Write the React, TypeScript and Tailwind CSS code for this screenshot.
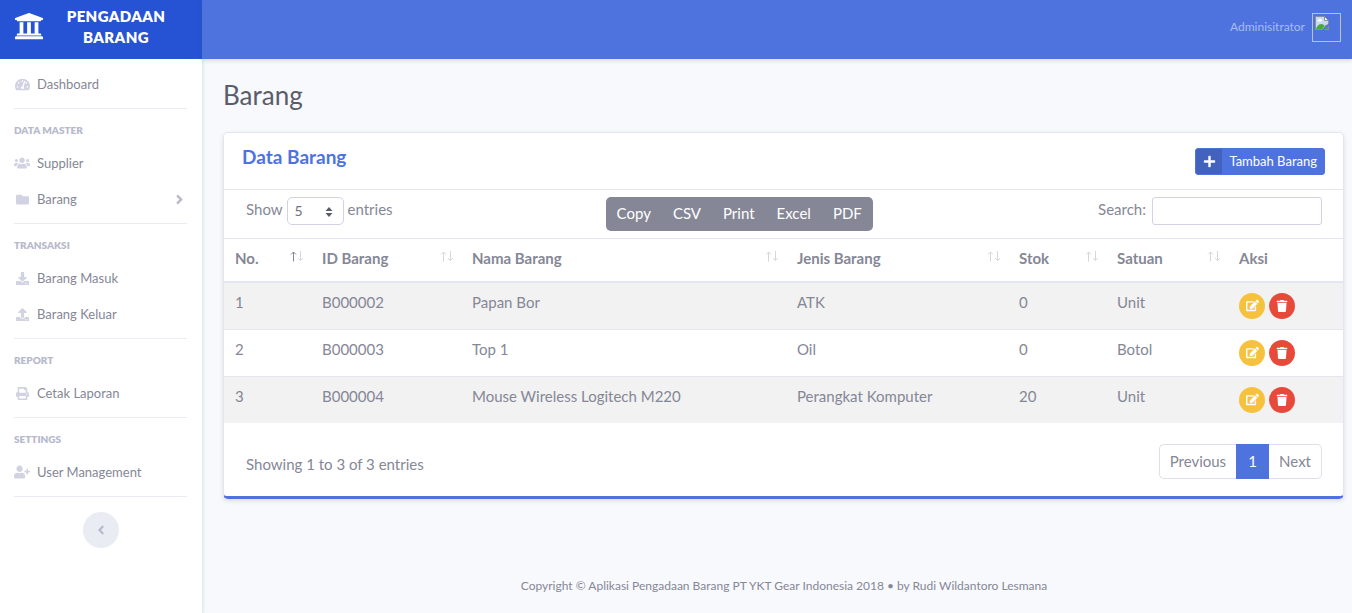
import { useState, type ReactNode } from "react";
import type { IconType } from "react-icons";
import {
  FaAngleLeft,
  FaAngleRight,
  FaDownload,
  FaEdit,
  FaFolder,
  FaPlus,
  FaPrint,
  FaTachometerAlt,
  FaTrash,
  FaUniversity,
  FaUpload,
  FaUserPlus,
  FaUsers,
} from "react-icons/fa";

type Item = { label: string; icon: IconType; iconSize: string; expandable?: boolean };

const sections: { title: string; items: Item[] }[] = [
  {
    title: "Data Master",
    items: [
      { label: "Supplier", icon: FaUsers, iconSize: "size-4" },
      { label: "Barang", icon: FaFolder, iconSize: "size-[13px]", expandable: true },
    ],
  },
  {
    title: "Transaksi",
    items: [
      { label: "Barang Masuk", icon: FaDownload, iconSize: "size-[13px]" },
      { label: "Barang Keluar", icon: FaUpload, iconSize: "size-[13px]" },
    ],
  },
  { title: "Report", items: [{ label: "Cetak Laporan", icon: FaPrint, iconSize: "size-[13px]" }] },
  { title: "Settings", items: [{ label: "User Management", icon: FaUserPlus, iconSize: "size-4" }] },
];

const columns = [
  { label: "No.", width: "w-[87px]" },
  { label: "ID Barang", width: "w-[150px]" },
  { label: "Nama Barang", width: "w-[325px]" },
  { label: "Jenis Barang", width: "w-[222px]" },
  { label: "Stok", width: "w-[98px]" },
  { label: "Satuan", width: "w-[122px]" },
  { label: "Aksi", width: "w-[115px]" },
];

const rows = [
  ["1", "B000002", "Papan Bor", "ATK", "0", "Unit"],
  ["2", "B000003", "Top 1", "Oil", "0", "Botol"],
  ["3", "B000004", "Mouse Wireless Logitech M220", "Perangkat Komputer", "20", "Unit"],
];

function NavItem({ item }: { item: Item }) {
  const Icon = item.icon;
  return (
    <li>
      <a href="#" className="flex h-9 items-center text-[13px] text-[#858796]">
        <span className="mr-[7px] flex w-4 justify-center text-[#d1d3e2]">
          <Icon className={item.iconSize} />
        </span>
        {item.label}
        {item.expandable && <FaAngleRight className="ml-auto size-[15px] text-[#b7b9cc]" />}
      </a>
    </li>
  );
}

function Sidebar() {
  return (
    <aside className="relative flex w-[202px] shrink-0 flex-col bg-white shadow-[0_2px_4px_rgba(58,59,69,0.2)]">
      <a href="#" className="flex h-[59px] items-center bg-[#2653d4] pb-[5px] pl-[14px] text-white">
        <FaUniversity className="mb-[3px] size-[30px] shrink-0" />
        <span className="flex-1 pr-[14px] text-center text-[15px] leading-[21px] font-extrabold tracking-wide uppercase">
          Pengadaan
          <br />
          Barang
        </span>
      </a>
      <nav className="pr-[15px] pl-[14px]">
        <ul className="pt-[7px] pb-[6px]">
          <NavItem item={{ label: "Dashboard", icon: FaTachometerAlt, iconSize: "size-[15px]" }} />
        </ul>
        {sections.map((s) => (
          <section key={s.title} className="border-t border-[#eaecf4] pt-[14px] pb-[6px]">
            <h2 className="pb-2 text-[10px] leading-[14px] font-extrabold text-[#b7b9cc] uppercase">{s.title}</h2>
            <ul>
              {s.items.map((i) => (
                <NavItem key={i.label} item={i} />
              ))}
            </ul>
          </section>
        ))}
        <div className="flex justify-center border-t border-[#eaecf4] pt-[15px]">
          <button
            type="button"
            aria-label="Collapse menu"
            className="flex size-9 items-center justify-center rounded-full bg-[#eaecf4] text-[#b7b9cc]"
          >
            <FaAngleLeft className="size-[14px]" />
          </button>
        </div>
      </nav>
    </aside>
  );
}

function MissingPicture() {
  return (
    <span className="block size-[29px] border border-[#c0c0c0] p-px">
      <svg viewBox="0 0 16 16" className="size-4" aria-hidden="true">
        <path d="M1.5 1.5h9l4 4v4l-3 1-2.500 4h-7.500z" fill="#c6d9f5" stroke="#8a8f98" />
        <path d="M10.500 1.500v4h4z" fill="#fff" stroke="#8a8f98" />
        <path d="M3.500 6.500a1.500 1.500 0 0 1 1-2 2 2 0 0 1 3.500 .5 1 1 0 0 1 0 1.500z" fill="#fff" />
        <path d="M2 14c.5-3 3-5 5.500-5 1.500 0 2.500 1 3 2l-2 3z" fill="#4caa34" />
        <path d="M14.500 10.500v4h-4z" fill="#4caa34" stroke="#8a8f98" />
        <path d="M9 15.500 15.500 9" stroke="#4e73df" strokeWidth="1.200" />
      </svg>
    </span>
  );
}

function SortArrows({ ascending }: { ascending: boolean }) {
  return (
    <svg viewBox="0 0 14 11" className="absolute top-[12px] right-[7px] h-[11px] w-[14px]" fill="none" aria-hidden="true">
      <path d="M3.500 10.500V1M1 3.500 3.500 1 6 3.500" stroke={ascending ? "#858796" : "#d6d7dd"} />
      <path d="M10.500 0v9.500M8 7l2.500 2.500L13 7" stroke="#d6d7dd" />
    </svg>
  );
}

function IconButton({ label, color, children }: { label: string; color: string; children: ReactNode }) {
  return (
    <button
      type="button"
      aria-label={label}
      className={`flex size-[26px] items-center justify-center rounded-full text-white ${color}`}
    >
      {children}
    </button>
  );
}

function ItemTable() {
  return (
    <table className="w-full table-fixed border-collapse text-left">
      <thead>
        <tr className="border-t border-b-2 border-t-[#e3e6f0] border-b-[#e3e6f0]">
          {columns.map((c, i) => (
            <th key={c.label} className={`relative h-[43px] px-[11px] pb-1 align-middle font-bold ${c.width}`}>
              {c.label}
              {i < 6 && <SortArrows ascending={i === 0} />}
            </th>
          ))}
        </tr>
      </thead>
      <tbody>
        {rows.map((r) => (
          <tr key={r[0]} className="border-t border-[#e3e6f0] odd:bg-[#f2f2f2]">
            {r.map((cell, i) => (
              <td key={i} className="px-[11px] pt-2 align-top">
                {cell}
              </td>
            ))}
            <td className="px-[11px] py-[10px] align-top">
              <div className="flex gap-1">
                <IconButton label="Edit" color="bg-[#f6c23e]">
                  <FaEdit className="size-[13px]" />
                </IconButton>
                <IconButton label="Hapus" color="bg-[#e74a3b]">
                  <FaTrash className="size-3" />
                </IconButton>
              </div>
            </td>
          </tr>
        ))}
      </tbody>
    </table>
  );
}

export default function App() {
  const [length, setLength] = useState("5");
  const [query, setQuery] = useState("");
  return (
    <div className="flex min-h-screen bg-[#f8f9fc] font-['Lato',sans-serif] text-[15px] leading-[22px] text-[#858796]">
      <Sidebar />
      <div className="flex min-w-0 flex-1 flex-col">
        <header className="relative flex h-[59px] items-center justify-end gap-[7px] bg-[#4e73df] pr-[11px] pb-1 shadow-[0_2px_4px_rgba(58,59,69,0.15)]">
          <span className="pb-[2px] text-[12px] text-[#a9bbef]">Adminisitrator</span>
          <MissingPicture />
        </header>

        <main className="flex-1 pt-5 pr-2 pl-[21px]">
          <h1 className="text-[26px] leading-8 text-[#5a5c69]">Barang</h1>

          <section className="mt-[21px] rounded-[5px] border border-b-[3px] border-[#e3e6f0] border-b-[#4e73df] bg-white shadow-[0_2px_4px_rgba(58,59,69,0.15)]">
            <div className="flex h-[57px] items-center justify-between border-b border-[#e3e6f0] px-[18px]">
              <h2 className="pb-2 text-[19px] font-bold text-[#4e73df]">Data Barang</h2>
              <button
                type="button"
                className="flex h-[27px] items-stretch overflow-hidden rounded-[3px] border border-[#4e73df] bg-[#4e73df] text-[13px] text-white"
              >
                <span className="flex w-[26px] items-center justify-center bg-[#4262be]">
                  <FaPlus className="size-[13px]" />
                </span>
                <span className="flex items-center px-[7px] pb-px">Tambah Barang</span>
              </button>
            </div>

            <div className="grid h-12 grid-cols-[3fr_5fr_4fr] items-start pt-[7px] pr-[21px] pl-[22px]">
              <label className="flex items-center gap-1">
                <span className="pb-1">Show</span>
                <span className="relative">
                  <select
                    value={length}
                    onChange={(e) => setLength(e.target.value)}
                    className="block h-7 w-[57px] appearance-none rounded-[5px] border border-[#d1d3e2] bg-white pl-[7px] text-[14px] text-[#6e707e]"
                  >
                    <option>5</option>
                    <option>10</option>
                    <option>25</option>
                  </select>
                  <svg viewBox="0 0 8 10" className="pointer-events-none absolute top-[10px] right-[11px] h-[10px] w-2" aria-hidden="true">
                    <path d="M4 0 7.500 4h-7zM4 10 .5 6h7z" fill="#5a5c69" />
                  </svg>
                </span>
                <span className="pb-1">entries</span>
              </label>
              <div className="flex h-[34px] items-stretch justify-self-center rounded-[5px] bg-[#858796] text-white">
                {["Copy", "CSV", "Print", "Excel", "PDF"].map((b) => (
                  <button key={b} type="button" className="px-[11px] pb-[2px]">
                    {b}
                  </button>
                ))}
              </div>
              <label className="flex items-center justify-end gap-[6px]">
                <span className="pb-1">Search:</span>
                <input
                  type="search"
                  value={query}
                  onChange={(e) => setQuery(e.target.value)}
                  className="h-7 w-[170px] rounded-[3px] border border-[#d1d3e2] bg-white px-2 text-[14px]"
                />
              </label>
            </div>

            <ItemTable />

            <div className="flex items-center justify-between pt-[21px] pr-[21px] pb-[17px] pl-[22px]">
              <p className="pt-[6px]">Showing 1 to 3 of 3 entries</p>
              <div className="flex h-[35px] items-stretch">
                <button type="button" className="rounded-l-[5px] border border-r-0 border-[#dddfeb] px-[10px]">
                  Previous
                </button>
                <button type="button" className="w-[33px] bg-[#4e73df] text-white">
                  1
                </button>
                <button type="button" className="rounded-r-[5px] border border-l-0 border-[#dddfeb] px-[10px]">
                  Next
                </button>
              </div>
            </div>
          </section>
        </main>

        <footer className="pb-4 pl-[14px] text-center text-[12px]">
          Copyright © Aplikasi Pengadaan Barang PT YKT Gear Indonesia 2018 • by Rudi Wildantoro Lesmana
        </footer>
      </div>
    </div>
  );
}
